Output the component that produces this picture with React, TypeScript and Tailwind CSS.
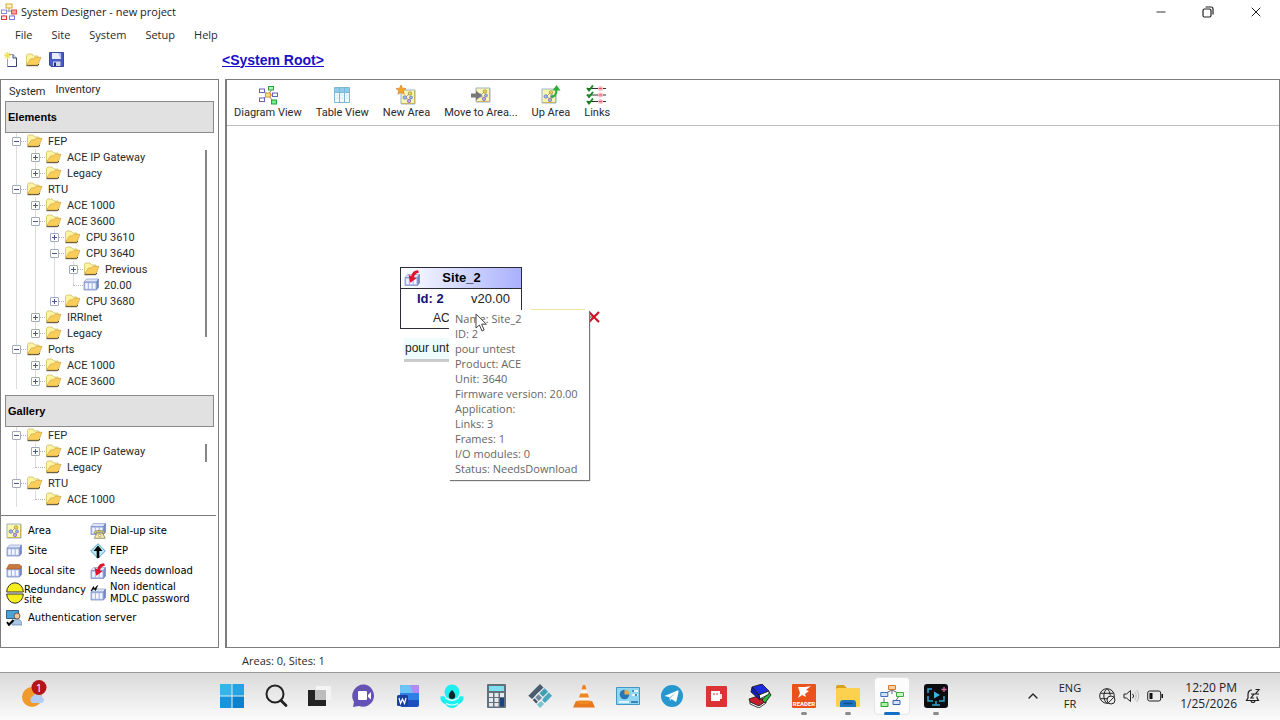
import { useState, type ReactNode } from "react";
import { ChevronUp, Minus, X } from "lucide-react";
import clsx from "clsx";

interface TreeItem {
  label: string;
  icon?: "folder" | "site";
  open?: boolean;
  leaf?: boolean;
  children?: TreeItem[];
}

const elements: TreeItem[] = [
  {
    label: "FEP",
    open: true,
    children: [{ label: "ACE IP Gateway" }, { label: "Legacy" }],
  },
  {
    label: "RTU",
    open: true,
    children: [
      { label: "ACE 1000" },
      {
        label: "ACE 3600",
        open: true,
        children: [
          { label: "CPU 3610" },
          {
            label: "CPU 3640",
            open: true,
            children: [
              { label: "Previous" },
              { label: "20.00", icon: "site", leaf: true },
            ],
          },
          { label: "CPU 3680" },
        ],
      },
      { label: "IRRInet" },
      { label: "Legacy" },
    ],
  },
  {
    label: "Ports",
    open: true,
    children: [{ label: "ACE 1000" }, { label: "ACE 3600" }],
  },
];

const gallery: TreeItem[] = [
  {
    label: "FEP",
    open: true,
    children: [{ label: "ACE IP Gateway" }, { label: "Legacy", leaf: true }],
  },
  {
    label: "RTU",
    open: true,
    children: [{ label: "ACE 1000", leaf: true }],
  },
];

const siteInfo = [
  "Name: Site_2",
  "ID: 2",
  "pour untest",
  "Product: ACE",
  "Unit: 3640",
  "Firmware version: 20.00",
  "Application:",
  "Links: 3",
  "Frames: 1",
  "I/O modules: 0",
  "Status: NeedsDownload",
];

/* ---------- icons ---------- */

function FolderIcon() {
  return (
    <svg width="17" height="14" viewBox="0 0 17 14" className="shrink-0">
      <path d="M1.500 12V2.500l1-1.500h4.500L8.500 3H13v3" fill="#fdf3a0" stroke="#d3bf68" strokeWidth="0.8" />
      <path d="M1.500 12 5.500 6l3.500-.2L10 4.300h6L13 12z" fill="#fbce5c" stroke="#c79a3c" strokeWidth="0.6" />
      <path d="M1.500 12.700h11.300l1-1.700" fill="none" stroke="#4e4420" strokeWidth="1" />
    </svg>
  );
}

function SiteShape({ roof = "#dfe6fa" }: { roof?: string }) {
  return (
    <g>
      <path d="M1 5 3.500 2H15.500L13.500 5z" fill={roof} stroke="#8f9dcc" strokeWidth="0.7" />
      <path d="M13.500 5 15.500 2V10.500L13.500 13z" fill="#7388cd" stroke="#6678b8" strokeWidth="0.6" />
      <path d="M1 5h12.500v8H1z" fill="#a9b9e8" stroke="#8795c6" strokeWidth="0.8" />
      <path d="M2.200 6.300h2.600v5.400H2.200zM6 6.300h2.600v5.400H6zM9.800 6.300h2.600v5.400H9.800z" fill="#f3f7ff" />
    </g>
  );
}

function SiteIcon() {
  return (
    <svg width="16" height="16" viewBox="0 0 16 16" className="shrink-0">
      <SiteShape />
    </svg>
  );
}

function LocalSiteIcon() {
  return (
    <svg width="16" height="16" viewBox="0 0 16 16" className="shrink-0">
      <g transform="translate(0 1)">
        <SiteShape />
      </g>
      <path d="M.5 6 3 1.500h10.500L15.500 4 14 6z" fill="#c9793c" stroke="#9c5626" strokeWidth="0.6" />
    </svg>
  );
}

function NeedsDownloadIcon() {
  return (
    <svg width="16" height="16" viewBox="0 0 16 16" className="shrink-0">
      <g transform="translate(0 2.500)">
        <SiteShape />
      </g>
      <path d="M14 .3C10 .5 7.800 3 7.300 6.300L4.500 4.800 6.300 12.800 12.500 8.200 10 7.500c.3-2.300 1.800-4.300 5-5z" fill="#e3122c" />
    </svg>
  );
}

function AreaShape() {
  return (
    <g>
      <path d="M1 1h14v14H1z" fill="#fbf6b0" stroke="#8faabf" strokeWidth="0.9" />
      <path d="M1.500 14.500h13V2" fill="none" stroke="#c8b45c" strokeWidth="1" />
      <path d="M5 9 9 5M6 9l5 3" stroke="#888" strokeWidth="0.7" />
      <circle cx="10" cy="4.500" r="1.800" fill="#e9d24a" stroke="#8c8350" strokeWidth="0.6" />
      <circle cx="4.800" cy="8.500" r="1.800" fill="#9db2f0" stroke="#5a69ad" strokeWidth="0.6" />
      <circle cx="11" cy="8.500" r="1.500" fill="#9db2f0" stroke="#5a69ad" strokeWidth="0.6" />
      <circle cx="9" cy="12" r="1.700" fill="#b7a8ee" stroke="#6a5aad" strokeWidth="0.6" />
    </g>
  );
}

function AreaIcon() {
  return (
    <svg width="16" height="16" viewBox="0 0 16 16" className="shrink-0">
      <AreaShape />
    </svg>
  );
}

function AppIcon() {
  return (
    <svg width="18" height="18" viewBox="0 0 18 18" className="shrink-0">
      <path d="M9 5v4M4 11V8h10v3M4 12v2M13 12v2" stroke="#999" fill="none" />
      <rect x="6" y="1" width="6" height="4" fill="#fff3c4" stroke="#e0a83c" />
      <rect x="1.500" y="7" width="5" height="3.500" fill="#fff" stroke="#8a8ad8" />
      <rect x="11.500" y="7" width="5" height="4" fill="#f6a0a0" stroke="#d94a4a" />
      <rect x="1.500" y="13" width="5" height="3.500" fill="#ffe1e1" stroke="#d23a3a" />
      <rect x="9.500" y="13" width="5" height="3.500" fill="#fff" stroke="#7a7ad0" />
    </svg>
  );
}

function NewFileIcon() {
  return (
    <svg width="14" height="16" viewBox="0 0 14 16">
      <path d="M3.500 2.500h5.500l3.500 3.500v8.500h-9z" fill="#fdfdff" stroke="#9aa0b8" />
      <path d="M9 2.500V6h3.500M3.500 14.500h9V6" fill="none" stroke="#3b4670" />
      <path d="M3.500 0v7M0 3.500h7M1 1l5 5M6 1 1 6" stroke="#f0e25a" strokeWidth="1.200" />
    </svg>
  );
}

function SaveIcon() {
  return (
    <svg width="15" height="15" viewBox="0 0 15 15">
      <path d="M.5.500h14v14H2l-1.500-1.500z" fill="#4a5bc4" stroke="#3a48a4" />
      <path d="M3 1h9v6H3z" fill="#e8edfb" />
      <path d="M9 1h3v6z" fill="#a9b9ea" />
      <path d="M4 9.500h7.500V14H4z" fill="#cfd5e8" />
      <path d="M5 10.500h2V14H5z" fill="#26307c" />
    </svg>
  );
}

function DiagramIcon() {
  return (
    <svg width="20" height="20" viewBox="0 0 20 20">
      <path d="M4 5l6 5 4-6M3 15l7-5 6 0M10 10l5 6" stroke="#8a8a8a" fill="none" />
      <rect x="7.500" y="8" width="5" height="4" fill="#f9d98a" stroke="#d39b35" />
      <rect x="1.500" y="4" width="5" height="3.500" fill="#fff" stroke="#6a5fc0" />
      <rect x="10.500" y="1.500" width="5" height="3.500" fill="#b5f0b5" stroke="#27a53a" />
      <rect x="14.500" y="8" width="5" height="3.500" fill="#fff" stroke="#6a5fc0" />
      <rect x="1.500" y="13" width="5" height="3.500" fill="#fff" stroke="#6a5fc0" />
      <rect x="13.500" y="15" width="5" height="4" fill="#7fe68a" stroke="#22a336" />
    </svg>
  );
}

function TableIcon() {
  return (
    <svg width="18" height="18" viewBox="0 0 18 18">
      <path d="M1.500 1.500h15v15h-15z" fill="#f2fbff" stroke="#7fb6d3" />
      <path d="M2 2h14v4H2z" fill="#8fcbe8" />
      <path d="M6.500 2v14M11.500 2v14M2 6.500h14" stroke="#7fb6d3" />
      <path d="M2.500 9h3M2.500 12h3M7.500 9h3M7.500 12h3M12.500 9h3M12.500 12h3" stroke="#cfe8f4" />
    </svg>
  );
}

function NewAreaIcon() {
  return (
    <svg width="20" height="20" viewBox="0 0 20 20">
      <g transform="translate(4 4)">
        <AreaShape />
      </g>
      <path d="m5 0 1.400 3.200L10 3.500 7.300 5.800 8.200 9.300 5 7.400 1.900 9.300 2.700 5.800 0 3.500l3.600-.3z" fill="#f5a52a" stroke="#d3761b" strokeWidth="0.6" />
    </svg>
  );
}

function MoveAreaIcon() {
  return (
    <svg width="20" height="18" viewBox="0 0 20 18">
      <g transform="translate(4 1)">
        <AreaShape />
      </g>
      <path d="M0 7.500h5V4.500l5.500 5L5 14.500v-3H0z" fill="#777" />
    </svg>
  );
}

function UpAreaIcon() {
  return (
    <svg width="20" height="20" viewBox="0 0 20 20">
      <g transform="translate(0 3)">
        <AreaShape />
      </g>
      <path d="M10 12c4-.5 5.500-3 5.500-7" fill="none" stroke="#2fae3d" strokeWidth="2" />
      <path d="m15.500 0 4 5.500h-8z" fill="#2fae3d" />
    </svg>
  );
}

function LinksIcon() {
  return (
    <svg width="22" height="20" viewBox="0 0 22 20">
      {[3.5, 10, 16.5].map((y) => (
        <g key={y}>
          <path d={`M2 ${y}h18`} stroke="#333" />
          <circle cx="14.500" cy={y} r="2.500" fill="#f8b9c0" />
          <path d={`M1 ${y - 0.5}l2 2.500 4-5`} stroke="#138a1e" strokeWidth="1.900" fill="none" />
          <path d={`M13 ${y}h3`} stroke="#dc5868" />
        </g>
      ))}
    </svg>
  );
}

function DialUpIcon() {
  return (
    <svg width="16" height="16" viewBox="0 0 16 16" className="shrink-0">
      <g transform="translate(0 -1.500)">
        <SiteShape />
      </g>
      <path d="M4 10c0-3.500 11-3.500 11 0l-2 .5-.5-1.500h-6L6 10.500z" fill="#f2e68b" stroke="#777040" strokeWidth="0.700" />
      <path d="M7 10h5.500l2.700 5.300H4.300z" fill="#f7efab" stroke="#777040" strokeWidth="0.700" />
      <circle cx="9.700" cy="12.500" r="1.300" fill="#fff" stroke="#777040" strokeWidth="0.600" />
    </svg>
  );
}

function FepIcon() {
  return (
    <svg width="16" height="16" viewBox="0 0 16 16" className="shrink-0">
      <path d="m8 .7 7.300 7.300L8 15.300.7 8z" fill="#b9ecfa" stroke="#5a9fc0" />
      <path d="M8 2.500 12.500 8H9.300v7H6.700V8H3.500z" fill="#000" />
    </svg>
  );
}

function RedundancyIcon() {
  return (
    <svg width="18" height="22" viewBox="0 0 18 22" className="shrink-0">
      <path d="M.7 10a8.300 9.200 0 0 1 16.600 0z" fill="#f6ee1c" stroke="#333" />
      <path d="M.7 12a8.300 9.200 0 0 0 16.600 0z" fill="#f6ee1c" stroke="#333" />
    </svg>
  );
}

function PasswordIcon() {
  return (
    <svg width="16" height="16" viewBox="0 0 16 16" className="shrink-0">
      <g transform="translate(0 2)">
        <SiteShape />
      </g>
      <path d="M1 6 3.500 1.500 4.500 4 7.500.5 5.500 5.500 4 3.500z" fill="#000" stroke="#000" strokeWidth="0.700" />
    </svg>
  );
}

function AuthIcon() {
  return (
    <svg width="16" height="16" viewBox="0 0 16 16" className="shrink-0">
      <path d="M.5.500h12v8H.5z" fill="#4ba3d6" stroke="#35618a" />
      <circle cx="11" cy="6" r="3" fill="#f0c49a" stroke="#5b4636" strokeWidth="0.800" />
      <path d="M6 15c0-4 2-5.500 5-5.500s5 1.500 5 5.500z" fill="#a9c8e8" stroke="#5f83a8" strokeWidth="0.700" />
      <path d="m1 12 2 2.800L7.500 10" stroke="#000" strokeWidth="2" fill="none" />
    </svg>
  );
}

/* ---------- tree ---------- */

function TreeNode({ item, last, guides }: { item: TreeItem; last: boolean; guides: boolean[] }) {
  const [open, setOpen] = useState(!!item.open);

  return (
    <li>
      <div className="flex h-4 items-center">
        {guides.map((line, i) => (
          <span key={i} className="flex h-4 w-[19px] shrink-0 justify-center">
            {line && <span className="h-4 border-l border-[#dcdcdc]" />}
          </span>
        ))}
        <span className="relative flex h-4 w-[19px] shrink-0 items-center justify-center">
          <span
            className={clsx(
              "absolute top-0 left-[9px] border-l border-[#dcdcdc]",
              last ? "h-2" : "h-4",
            )}
          />
          <span className="absolute top-2 left-[9px] w-[10px] border-t border-dotted border-[#b4b4b4]" />
          {!item.leaf && (
            <button
              aria-label={`Toggle ${item.label}`}
              onClick={() => setOpen(!open)}
              className="relative flex size-[9px] items-center justify-center rounded-[1px] border border-[#a3abba] bg-white"
            >
              <span className="absolute h-px w-[5px] bg-[#4a5694]" />
              {!open && <span className="absolute h-[5px] w-px bg-[#4a5694]" />}
            </button>
          )}
        </span>
        {item.icon === "site" ? <SiteIcon /> : <FolderIcon />}
        <span className="ml-[5px] pt-[2px] leading-[14px] whitespace-nowrap">{item.label}</span>
      </div>
      {open && item.children && (
        <ul>
          {item.children.map((child, i) => (
            <TreeNode
              key={child.label}
              item={child}
              last={i === item.children!.length - 1}
              guides={[...guides, !last]}
            />
          ))}
        </ul>
      )}
    </li>
  );
}

function Tree({ items, children }: { items: TreeItem[]; children: ReactNode }) {
  return (
    <div className="flex justify-between pr-[11px] pl-[6px]">
      <ul>
        {items.map((item) => (
          <TreeNode key={item.label} item={item} last={false} guides={[]} />
        ))}
      </ul>
      {children}
    </div>
  );
}

function PanelHeader({ children }: { children: ReactNode }) {
  return (
    <h2 className="mx-1 flex h-8 shrink-0 items-center border border-[#8a8a8a] bg-[#e1e1e1] px-[2px] font-['Liberation_Sans',Arial,sans-serif] font-bold text-black">
      {children}
    </h2>
  );
}

function Legend() {
  return (
    <div className="mr-[2px] grid shrink-0 grid-cols-[84px_1fr] grid-rows-[20px_20px_19px_26px_23px] items-center border-t border-[#7c7c7c] pt-[5px] pb-[18px] pl-[5px] font-['DejaVu_Sans',sans-serif] text-[10px] leading-3 text-black">
      <div className="flex items-center gap-[6px]"><AreaIcon />Area</div>
      <div className="flex items-center gap-1"><DialUpIcon />Dial-up site</div>
      <div className="flex items-center gap-[6px]"><SiteIcon />Site</div>
      <div className="flex items-center gap-1"><FepIcon />FEP</div>
      <div className="flex items-center gap-[6px]"><LocalSiteIcon />Local site</div>
      <div className="flex items-center gap-1"><NeedsDownloadIcon />Needs download</div>
      <div className="flex items-center leading-[10px]">
        <RedundancyIcon />
        <span className="pt-1">Redundancy<br />site</span>
      </div>
      <div className="flex items-center gap-1">
        <PasswordIcon />
        <span>Non identical<br />MDLC password</span>
      </div>
      <div className="col-span-2 flex items-center gap-[6px]"><AuthIcon />Authentication server</div>
    </div>
  );
}

function Sidebar() {
  const [tab, setTab] = useState("System");

  return (
    <aside className="flex w-[219px] shrink-0 flex-col border border-[#7c7c7c]">
      <div role="tablist" className="flex h-[21px] shrink-0 items-center gap-[10px] pl-2">
        {["System", "Inventory"].map((name) => (
          <button
            key={name}
            role="tab"
            aria-selected={tab === name}
            onClick={() => setTab(name)}
            className={tab === name ? "pt-1" : ""}
          >
            {name}
          </button>
        ))}
      </div>
      <PanelHeader>Elements</PanelHeader>
      <Tree items={elements}>
        <span className="mt-[17px] h-[187px] w-[2px] bg-[#858585]" />
      </Tree>
      <div className="h-[6px] shrink-0" />
      <PanelHeader>Gallery</PanelHeader>
      <div className="min-h-0 flex-1 overflow-hidden">
        <Tree items={gallery}>
          <span className="mt-[17px] h-[18px] w-[2px] bg-[#858585]" />
        </Tree>
      </div>
      <Legend />
    </aside>
  );
}

/* ---------- diagram ---------- */

const tools = [
  { label: "Diagram View", icon: <DiagramIcon /> },
  { label: "Table View", icon: <TableIcon /> },
  { label: "New Area", icon: <NewAreaIcon /> },
  { label: "Move to Area...", icon: <MoveAreaIcon /> },
  { label: "Up Area", icon: <UpAreaIcon /> },
  { label: "Links", icon: <LinksIcon /> },
];

function SiteNode() {
  return (
    <div className="absolute top-[141px] left-[173px] w-[122px] font-['Liberation_Sans',Arial,sans-serif] text-[13px] text-[#222]">
      <div className="h-[62px] border border-[#2c2c38] bg-white">
        <div className="flex h-[21px] items-center border-b border-[#2c2c38] bg-linear-to-r from-white to-[#aab0fb] pl-[3px]">
          <NeedsDownloadIcon />
          <span className="flex-1 pr-[18px] text-center font-bold text-black">Site_2</span>
        </div>
        <div className="flex h-5 items-center justify-between pr-[11px] pl-4">
          <b className="text-[#11117c]">Id: 2</b>
          <span>v20.00</span>
        </div>
        <div className="pl-8 text-xs leading-[18px]">ACE 3640</div>
      </div>
      <div className="mt-[9px] ml-1 h-6 w-20 border-b-[3px] border-[#c9cbcb] bg-[#effcfc] pl-[1px] text-xs leading-5 whitespace-nowrap">
        pour untest
      </div>
    </div>
  );
}

function SiteTooltip() {
  return (
    <div
      role="tooltip"
      className="absolute top-[184px] left-[222px] w-[140px] bg-white pt-[1px] pb-1 pl-[6px] font-['Open_Sans',sans-serif] leading-[15px] whitespace-nowrap text-[#666] shadow-[1px_1px_1px_#777]"
    >
      {siteInfo.map((line) => (
        <p key={line}>{line}</p>
      ))}
    </div>
  );
}

function Diagram() {
  return (
    <section className="ml-[6px] flex flex-1 flex-col border border-l-2 border-[#7c7c7c]">
      <div className="flex h-[46px] shrink-0 items-end gap-[14px] border-b border-[#bdbdbd] pb-[5px] pl-[7px]">
        {tools.map(({ label, icon }) => (
          <button key={label} className="flex flex-col items-center gap-[1px] leading-[14px] whitespace-nowrap">
            <span className="flex h-5 items-center">{icon}</span>
            {label}
          </button>
        ))}
      </div>
      <div className="relative flex-1">
        <SiteNode />
        <span className="absolute top-[183px] left-[304px] h-px w-[54px] bg-[#f7e3a0]" />
        <svg width="14" height="12" viewBox="0 0 14 12" className="absolute top-[185px] left-[360px]">
          <path d="M0 6h6" stroke="#555" />
          <path d="m2 1 10 10M12 1 2 11" stroke="#d21324" strokeWidth="2.200" />
        </svg>
        <SiteTooltip />
        <svg width="13" height="20" viewBox="0 0 13 20" className="absolute top-[187px] left-[248px]">
          <path d="M1 1v14l3.400-3 2.600 6 2.200-1-2.600-5.800h4.800z" fill="#fff" stroke="#444" />
        </svg>
      </div>
    </section>
  );
}

/* ---------- taskbar ---------- */

const apps: { name: string; state?: "running" | "active"; art: ReactNode }[] = [
  {
    name: "Start",
    art: (
      <g>
        <path d="M0 0h11.500v11.500H0z" fill="#35b5ec" />
        <path d="M12.500 0H24v11.500H12.500z" fill="#25a4e4" />
        <path d="M0 12.500h11.500V24H0z" fill="#1794dc" />
        <path d="M12.500 12.500H24V24H12.500z" fill="#0c82cf" />
      </g>
    ),
  },
  {
    name: "Search",
    art: (
      <g fill="none" stroke="#222">
        <circle cx="11" cy="10" r="8.500" strokeWidth="2" />
        <path d="m17 16.500 5 5" strokeWidth="2.800" strokeLinecap="round" />
      </g>
    ),
  },
  {
    name: "Task view",
    art: (
      <g>
        <path d="M8 2h15v14H8z" fill="#f4f4f4" />
        <path d="M0 6h18v16H0z" fill="#222" />
        <path d="M7 6h11v10H7z" fill="#bcbcbc" />
      </g>
    ),
  },
  {
    name: "Chat",
    art: (
      <g>
        <path d="M12.500.5a11.200 11.200 0 1 1-5.500 21.600L1 23l1-5A11.500 11.500 0 0 1 12.500.5z" fill="#6552b5" />
        <rect x="6" y="7" width="9" height="9" rx="1" fill="#fff" />
        <path d="m16 11 3-3v7.500l-3-2.500z" fill="#fff" />
      </g>
    ),
  },
  {
    name: "Word",
    art: (
      <g>
        <rect x="4" y="1" width="19" height="22" rx="2" fill="#1b4fc0" />
        <path d="M4 9V3a2 2 0 0 1 2-2h15a2 2 0 0 1 2 2v6z" fill="#6cc4f4" />
        <path d="M14 1h7a2 2 0 0 1 2 2v6h-6z" fill="#b18af2" />
        <path d="M4 9h19v7H4z" fill="#2f7fe4" />
        <rect x="1" y="11" width="11" height="11" rx="1.500" fill="#1a3f9f" />
        <path d="m3 14 1.500 5.500L6.500 15l2 4.500L10 14" fill="none" stroke="#fff" strokeWidth="1.200" />
      </g>
    ),
  },
  {
    name: "Flower",
    art: (
      <g>
        <circle cx="12" cy="8" r="7.500" fill="#1deef0" />
        <path d="M.5 12.500c4-1 7 1 8 3h7c1-2 4-4 8-3 .5 4-2 7-5 7.500-1 2.500-4 4-6.500 4s-5.500-1.500-6.500-4c-3-.5-5.500-3.500-5-7.500z" fill="#1deef0" />
        <path d="M5 13.500c2 1 3 3 7 3s5-2 7-3M6 19.500c4 2 8 2 12 0" fill="none" stroke="#e3fbfb" strokeWidth="1.200" />
        <path d="M12 6c2 2 3.200 3.800 3.200 5.800a3.200 3.200 0 0 1-6.400 0C8.800 9.800 10 8 12 6z" fill="#0b2427" />
      </g>
    ),
  },
  {
    name: "Calculator",
    art: (
      <g>
        <rect x="3" y="0" width="19" height="24" rx="1" fill="#62707b" />
        <path d="M5 2h15v5H5z" fill="#7ee0ee" />
        <path d="M5 9h4v4H5zM10.500 9h4v4h-4zM16 9h4v4h-4zM5 14h4v4H5zM10.500 14h4v4h-4zM5 19h4v3.500H5zM10.500 19h4v3.500h-4z" fill="#e6eaed" />
        <path d="M16 14h4v8.500h-4z" fill="#17447e" />
      </g>
    ),
  },
  {
    name: "Mosaic",
    art: (
      <g>
        <path d="m12 0 3.500 3.500L4 15 .3 11.700z" fill="#4a5c70" />
        <path d="m16.500 4.300 3.500 3.500-5 5-3.500-3.500z" fill="#3d9fb4" />
        <path d="m20.800 8.600 3.200 3.200L17 19l-3.300-3.200z" fill="#48a9bd" />
        <path d="m10.500 10.300 3.500 3.500-3.300 3.200-3.400-3.500z" fill="#6f8aa0" />
        <path d="m6.500 14.300 3.400 3.500-1.700 1.700-3.400-3.400z" fill="#415469" />
        <path d="m12.800 16.800 3.300 3.200-4 4-3.300-3.500z" fill="#7cc3d0" />
        <path d="m8 11.500 3.500-3.500M11 18.500l4-4" stroke="#f0f3f5" strokeWidth="1" />
      </g>
    ),
  },
  {
    name: "VLC",
    art: (
      <g>
        <path d="M4 17h16l3 6.500H1z" fill="#e8781c" />
        <path d="M10.700 1h2.600L18.500 18c-3 2-10 2-13 0z" fill="#f5f5f5" />
        <path d="M10.700 1h2.600l1.300 4.500H9.400zM8.200 9.500h7.600l1.200 4H7zM6 16.500h12l.5 2c-3 2-10 2-13 0z" fill="#f0861f" />
      </g>
    ),
  },
  {
    name: "Control Panel",
    art: (
      <g>
        <path d="M.5 3.500h23v17H.5z" fill="#8fd6f3" stroke="#4497c2" />
        <circle cx="8.500" cy="10.500" r="4.800" fill="#2776b4" />
        <path d="M8.500 10.500V5.700a4.800 4.800 0 0 1 4.800 4.800z" fill="#f4ab3d" />
        <path d="M16 7h6M16 11h6M3 18h10" stroke="#fff" strokeWidth="1.500" />
        <path d="M17 6v2M20 10v2M15 18h7" stroke="#1f6ba5" strokeWidth="1.500" />
      </g>
    ),
  },
  {
    name: "Telegram",
    art: (
      <g>
        <circle cx="12" cy="12" r="11" fill="#2798cf" />
        <path d="m4.500 12 13-5.500c.8-.3 1.300.2 1.100 1L16.500 17c-.2.8-.8 1-1.500.6l-3.300-2.500-1.600 1.700-.6-3.500z" fill="#fff" />
        <path d="m9.500 13.300 6.500-5-5 5.600-.9 2.900z" fill="#a9cde2" />
      </g>
    ),
  },
  {
    name: "Recorder",
    art: (
      <g>
        <rect x="2" y="2" width="21" height="21" rx="1" fill="#dc3336" />
        <path d="M7 7h9v10H7z" fill="#fff" />
        <path d="M16 10h2v5h-2z" fill="#ffe1e1" />
        <path d="M9 10h2M12 10h2" stroke="#dc3336" />
      </g>
    ),
  },
  {
    name: "Library",
    art: (
      <g stroke="#111" strokeWidth="0.800">
        <path d="m1 15 9-3 8 5-7 6-9-5z" fill="#c81e2c" />
        <path d="m2 18 9 4 7-5v2l-7 5-9-4z" fill="#fff" />
        <path d="m14 16 7-8 2 3-6 8z" fill="#28b53a" />
        <path d="M4 3 14 0l7 7-10 4z" fill="#1d2bdc" />
        <path d="m11 11 10-4v3l-9 5z" fill="#fff" />
        <path d="m4 3 7 8 1 5-9-8z" fill="#1420b0" />
      </g>
    ),
  },
  {
    name: "PDF Reader",
    state: "running",
    art: (
      <g>
        <rect width="24" height="24" rx="1" fill="#e9531b" />
        <path d="M6 3h7l6-1-5 4 3 1-4 3 1 3-4-2-4 3 2-5-1-3z" fill="#fff" />
        <text x="12" y="22" textAnchor="middle" fontSize="6" fontWeight="700" fontFamily="Roboto, sans-serif" fill="#fff">
          READER
        </text>
      </g>
    ),
  },
  {
    name: "File Explorer",
    state: "running",
    art: (
      <g>
        <path d="M0 3a2 2 0 0 1 2-2h6l3 3h11a2 2 0 0 1 2 2v4H0z" fill="#d9a21d" />
        <rect y="4" width="24" height="19" rx="1.500" fill="#fbd14e" />
        <path d="M4 23v-4a3 3 0 0 1 3-3h10a3 3 0 0 1 3 3v4z" fill="#1c74c0" />
        <path d="M7.500 19.500h9" stroke="#0c4d8a" strokeWidth="1.500" />
      </g>
    ),
  },
  {
    name: "System Designer",
    state: "active",
    art: (
      <g>
        <path d="M12 5v5M4 10l8-4 8 4M4 14v4M19 12l-4 6" stroke="#667" fill="none" />
        <path d="M8.500 1.500h7v4h-7z" fill="#fbd0a0" stroke="#d97a2b" />
        <path d="M.8 8.500h7v4h-7z" fill="#cfe3fb" stroke="#3d6bb8" />
        <path d="M16.500 8.500h7v4h-7z" fill="#c9f5c4" stroke="#3eab3e" />
        <path d="M1 18.500h7v4H1z" fill="#aef0a5" stroke="#2f9e35" />
        <path d="M13 16.500h7v4h-7z" fill="#d6e4fa" stroke="#3c5fae" />
      </g>
    ),
  },
  {
    name: "Screen Capture",
    state: "running",
    art: (
      <g>
        <rect width="24" height="24" rx="3" fill="#0b0d10" />
        <path d="M8 5H4v4M4 12v5h5M15 17h5v-5M12 17v4M8 21h8" fill="none" stroke="#2fa6cf" strokeWidth="1.500" />
        <path d="m10 7.500 6 3.500-6 3.500z" fill="#39b6e0" />
        <path d="M20 3v5M17.500 5.500h5" stroke="#d66a9c" strokeWidth="1.300" />
      </g>
    ),
  },
];

function Taskbar() {
  return (
    <footer className="flex h-12 shrink-0 items-center border-t border-[#9a9a9a] bg-linear-to-b from-[#dadada] to-[#fbfbfb] pb-[1px] font-['Open_Sans',sans-serif] text-[#222]">
      <button aria-label="Weather" className="ml-5 shrink-0">
        <svg width="28" height="32" viewBox="0 0 28 32">
          <circle cx="12" cy="17" r="10" fill="#f09a2c" />
          <path d="M12 23a4 4 0 0 1 1-7 5 5 0 0 1 9 1 3.200 3.200 0 0 1 0 6z" fill="#b5cdf5" />
          <circle cx="19" cy="7.500" r="7.500" fill="#b3151b" />
          <text x="19" y="12" textAnchor="middle" fontSize="11" fill="#fff">1</text>
        </svg>
      </button>
      <nav aria-label="Applications" className="ml-[162px] flex shrink-0">
        {apps.map(({ name, state, art }) => (
          <button
            key={name}
            aria-label={name}
            className="relative flex h-[46px] w-11 shrink-0 items-center justify-center"
          >
            {state === "active" && (
              <span className="absolute inset-x-1 top-1 bottom-1 rounded-[4px] border border-[#e4e4e4] bg-[#fcfcfc]" />
            )}
            <svg width="24" height="24" viewBox="0 0 24 24" className="relative">
              {art}
            </svg>
            {state && (
              <span
                className={clsx(
                  "absolute bottom-1 h-[3px] rounded-full",
                  state === "active" ? "w-4 bg-[#1271c4]" : "w-[6px] bg-[#8a8a8a]",
                )}
              />
            )}
          </button>
        ))}
      </nav>
      <div className="ml-auto flex shrink-0 items-center pr-[19px] leading-4">
        <button aria-label="Show hidden icons" className="mr-[18px]">
          <ChevronUp size={16} strokeWidth={2} />
        </button>
        <button className="mr-[18px] text-center">ENG<br />FR</button>
        <button aria-label="Network, volume and battery" className="mr-4 flex items-center gap-[7px]">
          <svg width="17" height="17" viewBox="0 0 17 17" fill="none" stroke="#222">
            <circle cx="8" cy="8" r="7.300" />
            <path d="M8 15.300C3.800 12 3.800 4 8 .7c2.200 1.800 3.200 4.300 3.200 6.800M1.500 5.300h13M1.500 10.700H8" />
            <circle cx="12" cy="12" r="4" fill="#eee" />
            <path d="m9.300 14.800 5.500-5.500" />
          </svg>
          <svg width="17" height="14" viewBox="0 0 17 14" fill="none" stroke="#222">
            <path d="M1 5v4h2.500L7.500 12.500v-11L3.500 5z" />
            <path d="M9.500 4.800a3 3 0 0 1 0 4.400" />
            <path d="M11.500 2.800a6 6 0 0 1 0 8.400M13.500 1a9 9 0 0 1 0 12" stroke="#bbb" />
          </svg>
          <svg width="17" height="12" viewBox="0 0 17 12">
            <rect x=".7" y="1" width="13" height="10" rx="2" fill="none" stroke="#222" />
            <path d="M2.500 3h3v6h-3zM14.500 4h1.500v4h-1.500z" fill="#111" />
          </svg>
        </button>
        <button className="mr-2 text-right text-xs leading-4">12:20 PM<br />1/25/2026</button>
        <button aria-label="Notifications">
          <svg width="16" height="16" viewBox="0 0 16 16" fill="none" stroke="#222" strokeWidth="1.200">
            <path d="M7 2C4.500 2 3 4 3 6.500V10l-1.500 2.500h12L12 10V8.500M6 13c.5 2 3.500 2 4 0M6 6h3l-3 4h3M10.500 1.500H14L10.500 6H14" />
          </svg>
        </button>
      </div>
    </footer>
  );
}

/* ---------- window ---------- */

export default function App() {
  return (
    <div className="flex min-h-screen flex-col bg-white font-['Roboto',sans-serif] text-[11px] text-[#2a2a2a]">
      <header className="flex h-6 shrink-0 items-center font-['Open_Sans',sans-serif] text-[#1a1a1a]">
        <AppIcon />
        <h1 className="ml-[3px]">System Designer - new project</h1>
        <div className="ml-auto flex items-center gap-[34px] pr-4">
          <button aria-label="Minimize"><Minus size={14} strokeWidth={1.5} /></button>
          <button aria-label="Restore">
            <svg width="12" height="12" viewBox="0 0 12 12" fill="none" stroke="#222" strokeWidth="1.200">
              <rect x="1" y="3" width="8" height="8" rx="1.500" />
              <path d="M3.500 1H9a2 2 0 0 1 2 2v5.500" />
            </svg>
          </button>
          <button aria-label="Close"><X size={16} strokeWidth={1.5} /></button>
        </div>
      </header>

      <nav className="flex h-[22px] shrink-0 items-center gap-[19px] pl-[15px] font-['Open_Sans',sans-serif]">
        {["File", "Site", "System", "Setup", "Help"].map((name) => (
          <button key={name}>{name}</button>
        ))}
      </nav>

      <div className="flex h-[33px] shrink-0 items-center pb-[6px] pl-1">
        <div className="flex w-[218px] items-center gap-[7px]">
          <button aria-label="New"><NewFileIcon /></button>
          <button aria-label="Open"><FolderIcon /></button>
          <button aria-label="Save"><SaveIcon /></button>
        </div>
        <a
          href="#root"
          className="font-['Liberation_Sans',Arial,sans-serif] text-sm font-bold text-[#1a0fc8] underline"
        >
          &lt;System Root&gt;
        </a>
      </div>

      <main className="flex flex-1">
        <Sidebar />
        <Diagram />
      </main>

      <div className="flex h-6 shrink-0 items-center pt-[2px] pl-[242px] font-['Open_Sans',sans-serif]">
        Areas: 0, Sites: 1
      </div>
      <Taskbar />
    </div>
  );
}
